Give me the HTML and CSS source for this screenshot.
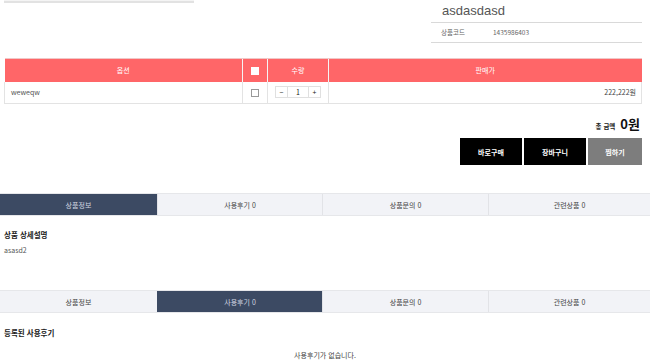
FILE: index.html
```html
<!DOCTYPE html>
<html lang="ko">
<head>
<meta charset="utf-8">
<link rel="stylesheet" href="styles.css">
</head>
<body>
<div class="top">
  <div class="thumb"></div>
  <div class="info">
    <h1 class="title">asdasdasd</h1>
    <div class="code-row"><span class="code-label">상품코드</span><span class="code-val">1435986403</span></div>
  </div>
</div>

<table class="opt">
  <thead>
    <tr>
      <th class="c-opt">옵션</th>
      <th class="c-chk"><span class="box box-white"></span></th>
      <th class="c-qty">수량</th>
      <th class="c-price">판매가</th>
    </tr>
  </thead>
  <tbody>
    <tr>
      <td class="c-opt l">weweqw</td>
      <td class="c-chk"><span class="box"></span></td>
      <td class="c-qty"><div class="qty"><span class="q-btn">−</span><span class="q-num">1</span><span class="q-btn">+</span></div></td>
      <td class="c-price r">222,222원</td>
    </tr>
  </tbody>
</table>

<div class="total"><span class="t-label">총 금액</span><span class="t-val">0원</span></div>

<div class="btns">
  <button class="btn b1">바로구매</button>
  <button class="btn b2">장바구니</button>
  <button class="btn b3">찜하기</button>
</div>

<div class="tabs t1">
  <div class="tab on">상품정보</div>
  <div class="tab">사용후기 0</div>
  <div class="tab">상품문의 0</div>
  <div class="tab">관련상품 0</div>
</div>
<div class="sec">
  <h2 class="sec-title">상품 상세설명</h2>
  <p class="sec-text">asasd2</p>
</div>

<div class="tabs t2">
  <div class="tab">상품정보</div>
  <div class="tab on">사용후기 0</div>
  <div class="tab">상품문의 0</div>
  <div class="tab">관련상품 0</div>
</div>
<div class="sec">
  <h2 class="sec-title">등록된 사용후기</h2>
  <p class="empty">사용후기가 없습니다.</p>
</div>
</body>
</html>
```

FILE: styles.css
```css
* { box-sizing: border-box; }
html, body { margin: 0; padding: 0; background: #fff; }
body {
  font-family: "Noto Sans CJK KR", "Noto Sans", sans-serif;
  color: #333;
  font-size: 7px;
  width: 650px;
  overflow: hidden;
}
.top {
  display: flex;
  justify-content: space-between;
  padding: 0 8px 0 4px;
  height: 58px;
}
.thumb {
  width: 190px;
  height: 3px;
  background: #f4f4f4;
  border-bottom: 2px solid #e2e2e2;
}
.info {
  width: 211px;
}
.title {
  margin: 0;
  padding: 1px 0 0 11px;
  height: 23px;
  font-family: "Liberation Sans", Arial, sans-serif;
  font-weight: 400;
  font-size: 13px;
  line-height: 19px;
  color: #555;
  border-bottom: 1px solid #d9d9d9;
}
.code-row {
  padding: 0 0 0 10px;
  height: 20px;
  line-height: 18px;
  border-bottom: 1px solid #d9d9d9;
  font-size: 6.5px;
  color: #666;
}
.code-label { display: inline-block; width: 52px; }
.opt {
  margin: 0 8px 0 4px;
  width: 638px;
  border-collapse: collapse;
  table-layout: fixed;
}
.opt th {
  background: #ff6668;
  color: #fff;
  font-weight: 400;
  height: 23px;
  font-size: 7px;
  border-left: 1px solid #f5f5f5;
  border-top: 1px solid #f0c7c7;
  padding: 0;
}
.opt th:first-child { border-left: 0; }
.opt td {
  height: 22px;
  border-bottom: 1px solid #e3e3e3;
  border-left: 1px solid #e3e3e3;
  font-size: 7px;
  color: #444;
  padding: 0;
  text-align: center;
}
.opt td:first-child { border-left: 1px solid #e3e3e3; }
.opt td:last-child { border-right: 1px solid #e3e3e3; }
.c-opt { width: 238px; }
.c-chk { width: 25px; }
.c-qty { width: 61px; }
.l { text-align: left !important; padding-left: 6px !important; color: #555 !important; }
.r { text-align: right !important; padding-right: 5px !important; }
.box {
  display: inline-block;
  width: 8px;
  height: 8px;
  border: 1px solid #999;
  background: #fff;
  vertical-align: middle;
}
.box-white { border-color: #fff; }
.qty {
  display: inline-flex;
  vertical-align: middle;
  height: 12px;
  border: 1px solid #e0e0e0;
}
.q-btn, .q-num {
  display: flex;
  align-items: center;
  justify-content: center;
  font-size: 7px;
  line-height: 1;
  color: #222;
}
.q-btn { width: 11px; }
.q-num { width: 22px; border-left: 1px solid #e0e0e0; border-right: 1px solid #e0e0e0; }
.total {
  display: flex;
  justify-content: flex-end;
  align-items: baseline;
  gap: 5px;
  padding: 10px 10px 0 0;
  height: 34px;
}
.t-label { font-size: 6.5px; font-weight: 700; color: #222; }
.t-val { font-size: 13px; font-weight: 700; color: #111; font-family: "Noto Sans CJK KR", sans-serif; }
.btns {
  display: flex;
  justify-content: flex-end;
  gap: 2px;
  padding-right: 8px;
  height: 55px;
}
.btn {
  height: 27px;
  border: 0;
  margin: 0;
  padding: 0;
  font-family: "Noto Sans CJK KR", sans-serif;
  font-size: 7px;
  font-weight: 700;
  color: #fff;
  background: #000;
}
.b1 { width: 62px; }
.b2 { width: 62px; }
.b3 { width: 54px; background: #7d7d7d; }
.tabs {
  display: grid;
  grid-template-columns: 157px 165px 166px 1fr;
  height: 23px;
  background: #f2f3f7;
  border-top: 1px solid #e6e7ea;
  border-bottom: 1px solid #e6e7ea;
}
.tab {
  display: flex;
  align-items: center;
  justify-content: center;
  font-size: 7px;
  color: #444;
  border-left: 1px solid #e2e3e7;
}
.tab:first-child { border-left: 0; }
.tab.on { background: #3c4a63; color: #cfd5e0; border-color: #3c4a63; }
.sec { padding: 0 4px; }
.t1 + .sec { height: 74px; padding-top: 13px; }
.sec-title {
  margin: 0;
  font-size: 7.5px;
  font-weight: 700;
  color: #222;
  line-height: 12px;
}
.sec-text {
  margin: 4px 0 0;
  font-size: 7px;
  color: #555;
  line-height: 10px;
}
.t2 + .sec { padding-top: 14px; }
.empty {
  margin: 11px 0 0;
  text-align: center;
  font-size: 7px;
  color: #444;
}
```
